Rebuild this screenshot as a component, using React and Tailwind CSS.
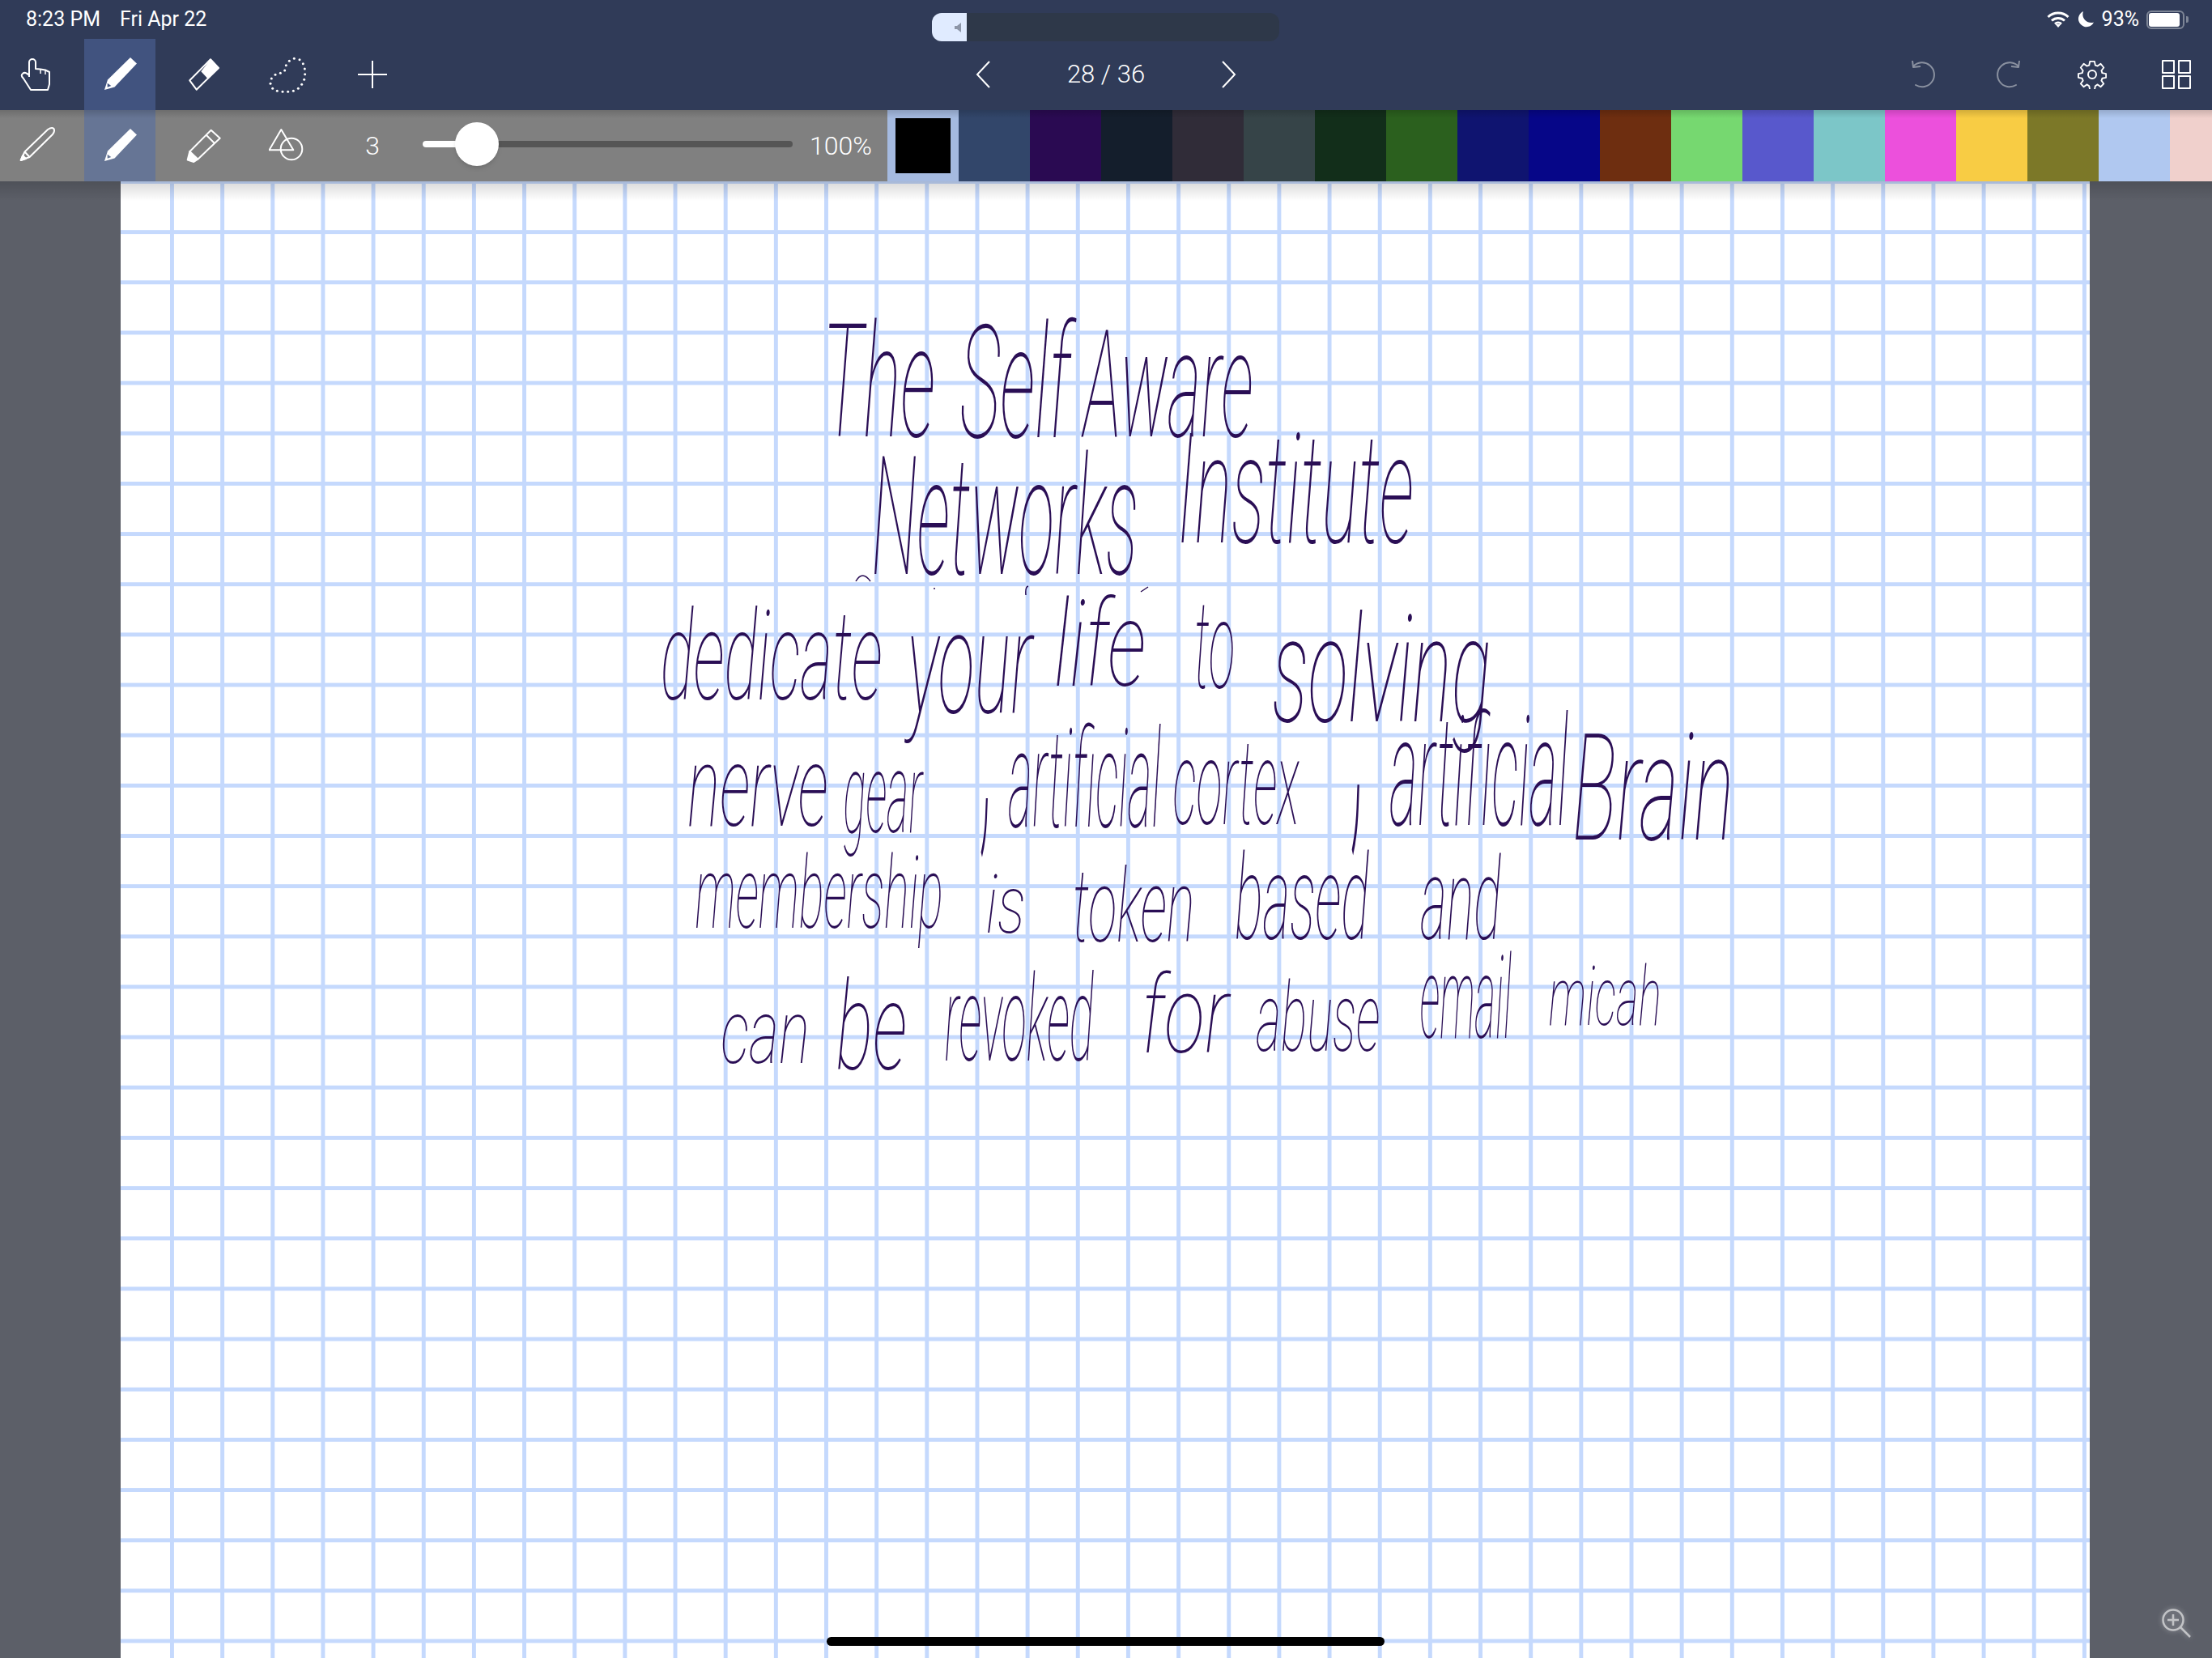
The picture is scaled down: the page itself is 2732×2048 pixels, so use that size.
import React, { useLayoutEffect, useRef, useState } from "react";

const INK_FONT = "italic 100 120px Roboto";

// handwritten words: text, then the box the ink fills on the page
const words = [
  ["The", 1024, 393, 1153, 542],
  ["Self", 1187, 390, 1330, 543],
  ["Aware", 1335, 408, 1546, 542],
  ["Networks", 1080, 556, 1403, 712],
  ["Institute", 1459, 533, 1744, 673],
  ["dedicate", 819, 749, 1088, 867],
  ["your", 1117, 784, 1278, 920],
  ["life", 1305, 733, 1413, 849],
  ["to", 1478, 749, 1523, 853],
  ["solving", 1573, 753, 1838, 933],
  ["nerve", 851, 943, 1021, 1022],
  ["gear", 1042, 953, 1141, 1059],
  [",", 1211, 990, 1220, 1065],
  ["artificial", 1246, 892, 1434, 1024],
  ["cortex", 1450, 920, 1605, 1020],
  [",", 1669, 974, 1679, 1064],
  ["artificial", 1717, 873, 1937, 1022],
  ["Brain", 1946, 904, 2136, 1040],
  ["membership", 860, 1053, 1162, 1173],
  ["is", 1220, 1080, 1264, 1154],
  ["token", 1328, 1069, 1472, 1165],
  ["based", 1527, 1050, 1691, 1162],
  ["and", 1755, 1054, 1854, 1162],
  ["can", 892, 1253, 996, 1315],
  ["be", 1035, 1208, 1118, 1324],
  ["revoked", 1168, 1198, 1351, 1312],
  ["for", 1416, 1198, 1521, 1302],
  ["abuse", 1552, 1209, 1703, 1300],
  ["email", 1755, 1175, 1867, 1284],
  ["micah", 1914, 1190, 2049, 1268],
];

const swatches = [
  "bg-[#32466a]", "bg-[#2a0a52]", "bg-[#141e2c]", "bg-[#302c38]", "bg-[#364448]", "bg-[#122e1a]",
  "bg-[#2b601e]", "bg-[#0f1470]", "bg-[#060688]", "bg-[#6e2e10]", "bg-[#76d870]", "bg-[#5858cc]",
  "bg-[#7cc6c8]", "bg-[#ec50dc]", "bg-[#f8cc44]", "bg-[#7c7828]", "bg-[#b0c8f0]", "bg-[#f0d0cc]",
];

const lassoDots = [
  [190, 37], [210, 41], [223, 56], [229, 75], [230, 95], [227, 115], [218, 133], [205, 148], [187, 157], [167, 160],
  [147, 160], [127, 157], [110, 148], [102, 130], [106, 111], [120, 97], [139, 91], [155, 81], [160, 62], [172, 46],
];

// stretches one word so its ink fills the box measured from the page
const InkWord = ({ text, x0, y0, x1, y1 }) => {
  const [box, setBox] = useState(null);
  const ref = useRef(null);

  useLayoutEffect(() => {
    const ctx = document.createElement("canvas").getContext("2d");
    ctx.font = INK_FONT;
    const m = ctx.measureText(text);
    const inkW = m.actualBoundingBoxLeft + m.actualBoundingBoxRight;
    const inkH = m.actualBoundingBoxAscent + m.actualBoundingBoxDescent;
    const base = ref.current.offsetHeight / 2 + 120 * 0.35;
    const sx = (x1 - x0) / inkW;
    const sy = (y1 - y0) / inkH;
    setBox({
      left: x0 - 149 + m.actualBoundingBoxLeft * sx,
      top: y0 - 224 - (base - m.actualBoundingBoxAscent) * sy,
      sx,
      sy,
    });
  }, [text, x0, y0, x1, y1]);

  return (
    <span
      ref={ref}
      className="absolute left-0 top-0 origin-top-left whitespace-nowrap font-['Roboto',sans-serif] text-[120px] font-thin italic leading-none text-[#2a0e55]"
      style={box ? { transform: `translate(${box.left}px, ${box.top}px) scale(${box.sx}, ${box.sy})` } : undefined}
    >
      {text}
    </span>
  );
};

const Icon = ({ children, className = "w-[48px] h-[48px]", ...rest }) => (
  <svg viewBox="0 0 48 48" fill="none" stroke="currentColor" strokeWidth="2" strokeLinejoin="round" className={className} {...rest}>
    {children}
  </svg>
);

const HandIcon = () => (
  <Icon>
    <path d="M16 27V9a4 4 0 0 1 8 0v8l6 .5l6 1l5 2.500V36l-2 7H18L9 29q-4-4-1-6q3-3 8 2" />
    <path d="M30 18v5M36 19v5" strokeWidth="1.500" />
  </Icon>
);

const PencilFill = ({ tip }) => (
  <Icon>
    <path d="M37 3l8 7.500L17.500 39.500L5 43l4-12.500z" fill="currentColor" stroke="none" />
    <path d="M8.700 34.700l4.600 3.300l-4.600 1.700z" fill={tip} stroke="none" />
  </Icon>
);

const EraserIcon = () => (
  <Icon>
    <path d="M32 5.300L42 16L14.700 42.700L6.300 31.300z" />
    <path d="M32 5.300L42 16L28.700 29.300L20.300 20.300z" fill="currentColor" stroke="none" />
  </Icon>
);

const LassoIcon = () => (
  <svg viewBox="96 24 144 144" className="h-[48px] w-[48px] fill-white">
    {lassoDots.map(([cx, cy]) => (
      <circle key={`${cx}-${cy}`} cx={cx} cy={cy} r="4.500" />
    ))}
  </svg>
);

const PlusIcon = () => (
  <Icon>
    <path d="M24 7v34M6 24h36" />
  </Icon>
);

const PenIcon = () => (
  <Icon>
    <path d="M5.700 42L10.500 31.500L39 4q5-3.500 7.500-1q1.500 3.500-1.500 7L16.500 38z" />
    <path d="M10.500 31.500l6 6.500" />
    <path d="M5.700 42l2.300-6l4 4z" fill="currentColor" />
  </Icon>
);

const PencilOutline = () => (
  <Icon>
    <path d="M32.700 4.700L43.700 14.700L16.300 40.700L6.300 31.300z" />
    <path d="M27 11l10 10" />
    <path d="M6.300 31.300L3.700 41.500L11.300 44L16.300 40.700z" fill="currentColor" />
  </Icon>
);

const ShapesIcon = () => (
  <Icon>
    <path d="M15.300 4L.5 29.300h29.800z" />
    <circle cx="28" cy="28" r="13.300" />
  </Icon>
);

const UndoIcon = () => (
  <Icon className="w-[36px] h-[36px]" viewBox="0 0 36 36">
    <path d="M5 8a15 15 0 1 1 3 23" strokeLinecap="round" />
    <path d="M4 1l1 8l9-1" />
  </Icon>
);

const RedoIcon = () => (
  <Icon className="w-[36px] h-[36px]" viewBox="0 0 36 36">
    <path d="M31 8a15 15 0 1 0-3 23" strokeLinecap="round" />
    <path d="M32 1l-1 8l-9-1" />
  </Icon>
);

const GearIcon = () => (
  <Icon className="w-[36px] h-[36px]" viewBox="0 0 36 36">
    <path d="M15 2h6l1 5l3 1l4-3l4 5l-3 4l1 3l5 1v5l-5 1l-1 3l3 4l-4 4l-4-3l-3 2l-1 5h-6l-1-5l-3-2l-4 3l-4-4l3-4l-1-3l-5-1v-5l5-1l1-3l-3-4l4-5l4 3l3-1z" transform="scale(0.95) translate(1 0)" />
    <circle cx="18" cy="18" r="5" />
  </Icon>
);

const GridIcon = () => (
  <Icon className="w-[36px] h-[36px]" viewBox="0 0 36 36">
    <path d="M1 1h14v15H1zM21 1h14v15H21zM1 20h14v15H1zM21 20h14v15H21z" />
  </Icon>
);

const App = () => {
  return (
    <div className="relative flex h-[2048px] w-[2732px] flex-col overflow-hidden bg-[#5c5f68] font-['Roboto',sans-serif]">
      <div className="bg-[#303b58] text-white">
        {/* status bar */}
        <div className="relative flex h-[48px] items-center justify-between pl-[32px] pr-[29px] text-[25px]">
          <div className="flex gap-[24px]">
            <span>8:23 PM</span>
            <span>Fri Apr 22</span>
          </div>
          <div className="absolute left-[1151px] top-[16px] flex h-[35px] w-[429px] overflow-hidden rounded-[12px] bg-[#2e3849]">
            <div className="flex w-[43px] items-center justify-end bg-[#e0ebff] pr-[3px]">
              <svg viewBox="0 0 12 12" className="h-[12px] w-[12px] fill-[#8d96a8]">
                <path d="M0 4h3l5-4v12l-5-4H0z" />
              </svg>
            </div>
          </div>
          <div className="flex items-center gap-[9px]">
            <svg viewBox="0 0 28 20" className="h-[20px] w-[28px]" fill="none" stroke="white" strokeWidth="3">
              <path d="M1.500 7a18 18 0 0 1 25 0M6 11.500a12 12 0 0 1 16 0M10 15.500a6 6 0 0 1 8 0" />
              <path d="M10.500 16L14 20l3.500-4z" fill="white" stroke="none" />
            </svg>
            <svg viewBox="0 0 20 20" className="ml-[1px] h-[20px] w-[20px] fill-white">
              <path d="M7 0a10 10 0 1 0 13 13.500C12 16 4 9 7 0z" />
            </svg>
            <span className="ml-[1px]">93%</span>
            <div className="flex items-center">
              <div className="h-[23px] w-[47px] rounded-[6px] border-2 border-[#7d8596] p-[1px]">
                <div className="h-full w-[38px] rounded-[3px] bg-white" />
              </div>
              <div className="ml-[2px] h-[8px] w-[3px] rounded-r-[2px] bg-[#7d8596]" />
            </div>
          </div>
        </div>

        {/* main toolbar */}
        <div className="grid h-[88px] grid-cols-[1fr_auto_1fr] items-center">
          <div className="flex gap-4">
            <div className="flex h-[88px] w-[88px] items-center justify-center"><HandIcon /></div>
            <div className="flex h-[88px] w-[88px] items-center justify-center bg-[#41537f]"><PencilFill tip="#41537f" /></div>
            <div className="flex h-[88px] w-[88px] items-center justify-center"><EraserIcon /></div>
            <div className="flex h-[88px] w-[88px] items-center justify-center"><LassoIcon /></div>
            <div className="flex h-[88px] w-[88px] items-center justify-center"><PlusIcon /></div>
          </div>
          <div className="flex w-[322px] items-center justify-between">
            <svg viewBox="0 0 18 34" className="h-[34px] w-[18px]" fill="none" stroke="white" strokeWidth="2">
              <path d="M17 1L2 17l15 16" />
            </svg>
            <span className="text-[31px] font-light">28 / 36</span>
            <svg viewBox="0 0 18 34" className="h-[34px] w-[18px]" fill="none" stroke="white" strokeWidth="2">
              <path d="M1 1l15 16L1 33" />
            </svg>
          </div>
          <div className="flex justify-end gap-4">
            <div className="flex h-[88px] w-[88px] items-center justify-center text-[#8a91a0]"><UndoIcon /></div>
            <div className="flex h-[88px] w-[88px] items-center justify-center text-[#8a91a0]"><RedoIcon /></div>
            <div className="flex h-[88px] w-[88px] items-center justify-center"><GearIcon /></div>
            <div className="flex h-[88px] w-[88px] items-center justify-center"><GridIcon /></div>
          </div>
        </div>
      </div>

      {/* tool options and palette */}
      <div className="flex h-[88px] shrink-0 items-center bg-[#808080] text-white">
        <div className="flex shrink-0 gap-4">
          <div className="flex h-[88px] w-[88px] items-center justify-center"><PenIcon /></div>
          <div className="flex h-[88px] w-[88px] items-center justify-center bg-[#667595]"><PencilFill tip="#667595" /></div>
          <div className="flex h-[88px] w-[88px] items-center justify-center"><PencilOutline /></div>
          <div className="flex h-[88px] w-[88px] items-center justify-center"><ShapesIcon /></div>
          <div className="flex h-[88px] w-[88px] items-center justify-center text-[32px] font-light">3</div>
        </div>
        <div className="relative mb-[4px] ml-[18px] h-[8px] w-[457px] shrink-0 rounded-full bg-[#555555]">
          <div className="h-full w-[50px] rounded-full bg-white" />
          <div className="absolute left-[40px] top-[-23px] h-[54px] w-[54px] rounded-full bg-white shadow-md" />
        </div>
        <span className="ml-[21px] w-[96px] shrink-0 whitespace-nowrap text-[32px] font-light">100%</span>
        <div className="flex shrink-0">
          <div className="flex h-[88px] w-[88px] items-center justify-center bg-[#a5bae0]">
            <div className="h-[68px] w-[68px] bg-black" />
          </div>
          {swatches.map((color) => (
            <div key={color} className={`h-[88px] w-[88px] ${color}`} />
          ))}
        </div>
      </div>

      {/* page: rows here, columns on the inner layer because the first column line is cut off */}
      <div className="relative ml-[149px] mr-[151px] flex-1 bg-white bg-[linear-gradient(to_bottom,#c5d9fd_5px,transparent_5px)] bg-[size:100%_62.17px] bg-[position:0_-2px]">
        <div className="absolute inset-y-0 left-[4px] right-0 bg-[linear-gradient(to_right,#c5d9fd_5px,transparent_5px)] bg-[size:62.17px_100%] bg-[position:57px_0]" />
        {words.map(([text, x0, y0, x1, y1], i) => (
          <InkWord key={i} text={text} x0={x0} y0={y0} x1={x1} y1={y1} />
        ))}
        {/* stray pen marks */}
        <svg viewBox="149 224 2432 1824" className="absolute inset-0 h-full w-full" fill="none" stroke="#2a0e55" strokeWidth="1.500">
          <path d="M1057 718q8-14 18 0M1154 726v2M1267 735q-1-10 3-11M1409 731l9-6" />
        </svg>
      </div>

      {/* shadows the bars cast on what is under them */}
      <div className="pointer-events-none absolute left-0 right-0 top-[136px] h-[10px] bg-gradient-to-b from-black/15 to-transparent" />
      <div className="pointer-events-none absolute left-0 right-0 top-[224px] h-[24px] bg-gradient-to-b from-black/15 to-transparent" />

      <div className="absolute left-[1021px] top-[2022px] h-[11px] w-[689px] rounded-full bg-black" />

      <svg viewBox="0 0 36 36" className="absolute left-[2670px] top-[1987px] h-[36px] w-[36px] drop-shadow-[0_0_3px_rgba(255,255,255,0.4)]" fill="none" stroke="#c2c3c6" strokeWidth="2.500">
        <circle cx="14" cy="14" r="12.500" />
        <path d="M14 7v14M7 14h14M23 23l12 12" />
      </svg>
    </div>
  );
};

export default App;
